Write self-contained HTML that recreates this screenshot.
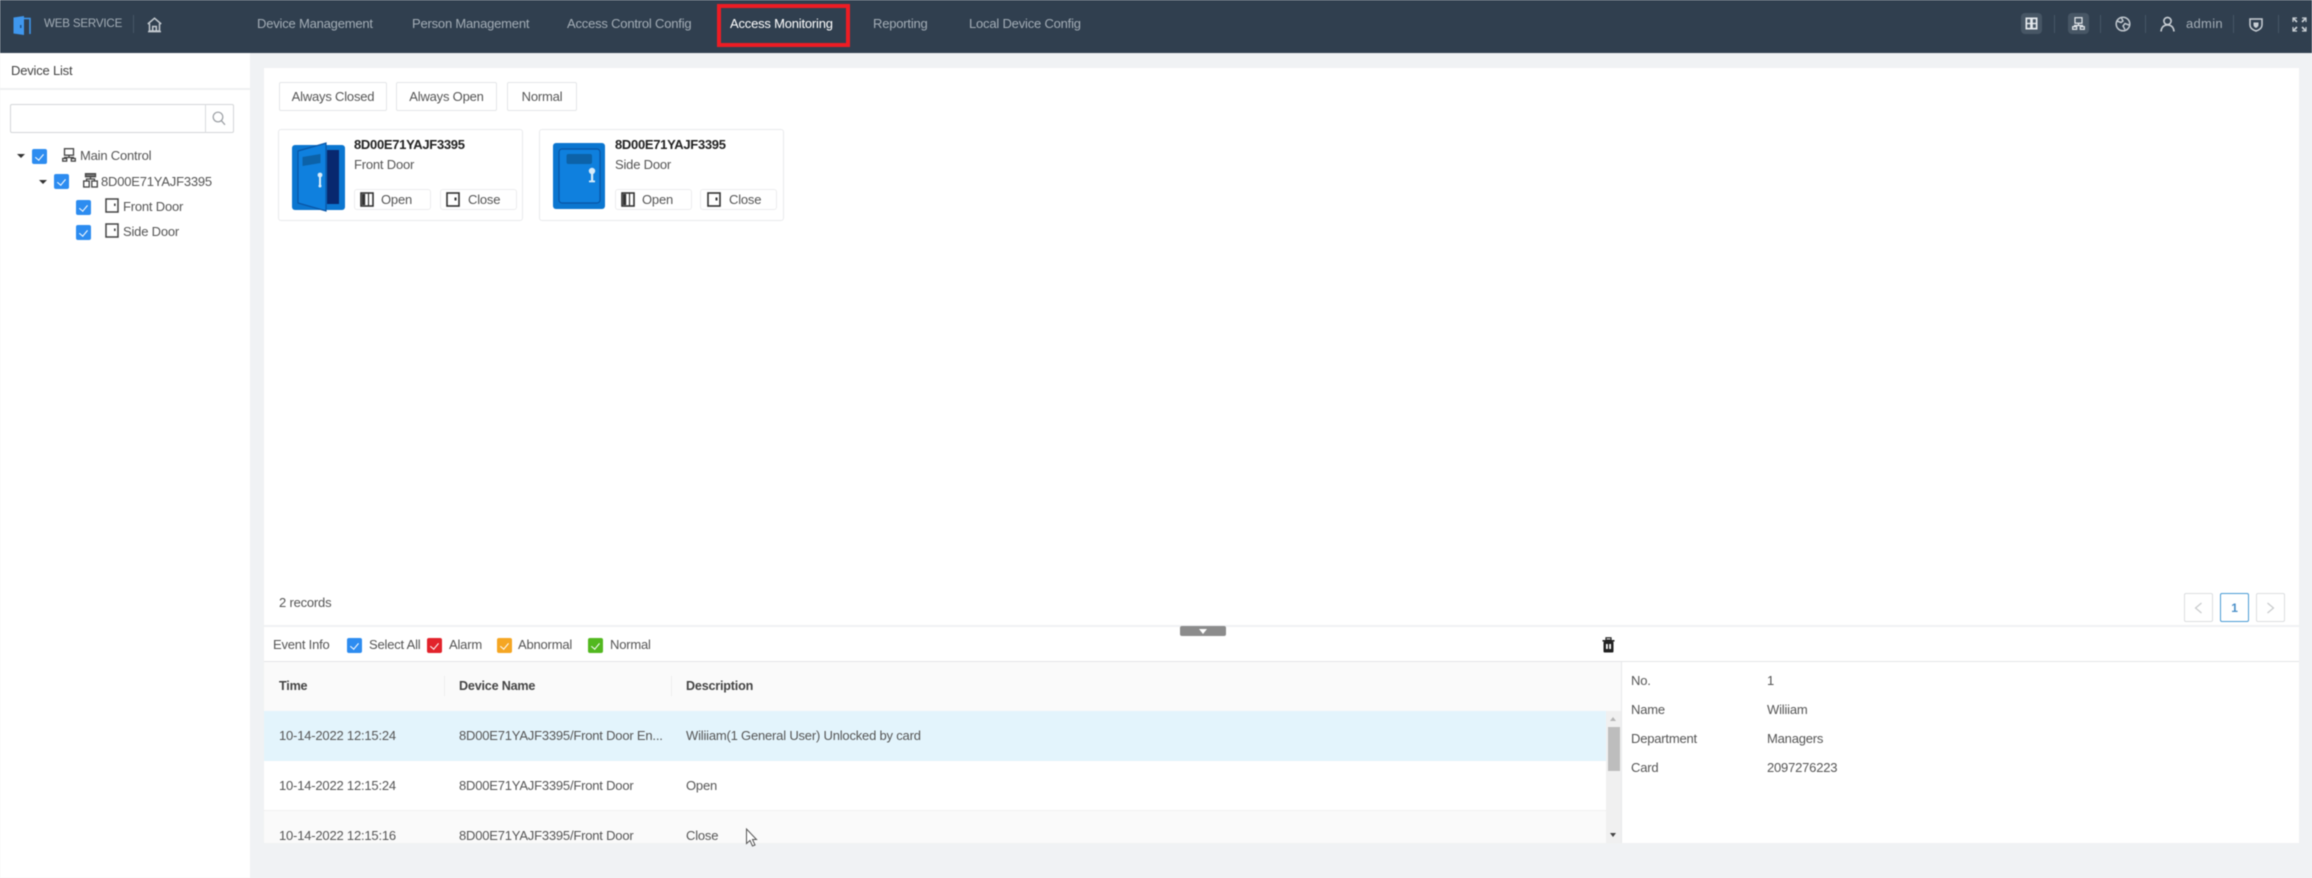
<!DOCTYPE html>
<html><head><meta charset="utf-8"><style>
html,body{margin:0;padding:0;width:2312px;height:878px;overflow:hidden;background:#f0f2f4}
#r{position:absolute;left:0;top:0;width:2312px;height:878px;overflow:hidden;filter:blur(.45px);font-family:"Liberation Sans",sans-serif;font-size:13px;letter-spacing:-.2px;color:#444}
#r div,#r span,#r svg{position:absolute;box-sizing:border-box}
.t{white-space:nowrap;line-height:20px;height:20px}
.n{color:#a3adb6;top:14px}
.sep{width:1px;background:#465565;top:15px;height:18px}
.btn{background:#fff;border:1px solid #e4e6e8;border-radius:2px;text-align:center;line-height:28px;color:#555}
.cd{background:#fff;border:1px solid #e9eaec;border-radius:3px}
.mb{background:#fff;border:1px solid #ececee;border-radius:3px;height:21px;width:77px}
.cb{width:15px;height:15px;border-radius:2px;background:#2d8cf0}
.cb:after{content:"";position:absolute;left:5px;top:2.5px;width:3.5px;height:7px;border:solid #fff;border-width:0 1.6px 1.6px 0;transform:rotate(40deg)}
.tri{width:0;height:0;border-left:4px solid transparent;border-right:4px solid transparent;border-top:4px solid #333}
.ti{font-weight:bold;font-size:13px;letter-spacing:-.3px;color:#222}
.th{font-weight:bold;font-size:12.6px;letter-spacing:-.2px;color:#444}
</style></head><body><div id="r">

<div style="left:0;top:0;width:2312px;height:53px;background:#303f4f"></div>
<svg style="left:12px;top:15px" width="20" height="21" viewBox="0 0 20 21"><path d="M1.5 2.5 L12 1 V20 L1.5 18.5 Z" fill="#3f97ee"/><path d="M12 3.5 H18 V19" fill="none" stroke="#3f97ee" stroke-width="1.5"/><rect x="8" y="10" width="1.5" height="3" fill="#1c4f86"/></svg>
<div class="t" style="left:44px;top:14px;color:#a3adb6;font-size:11.6px;letter-spacing:-.2px">WEB SERVICE</div>
<div class="sep" style="left:133px"></div>
<svg style="left:147px;top:17px" width="15" height="16" viewBox="0 0 15 16" fill="none" stroke="#c4cad0" stroke-width="1.5"><path d="M.8 7 L7.5 1.2 L14.2 7"/><path d="M2.5 6.5 V14 H12.5 V6.5"/><path d="M1 14.6 H14"/><path d="M5.7 14 V9.5 H9.3 V14"/></svg>
<div class="t n" style="left:257px">Device Management</div>
<div class="t n" style="left:412px">Person Management</div>
<div class="t n" style="left:567px">Access Control Config</div>
<div class="t" style="left:730px;top:14px;color:#fff">Access Monitoring</div>
<div style="left:717px;top:4px;width:133px;height:43px;border:4.5px solid #ed1c24"></div>
<div class="t n" style="left:873px">Reporting</div>
<div class="t n" style="left:969px">Local Device Config</div>

<div style="left:2021px;top:13px;width:21px;height:21px;border-radius:4px;background:#475665"></div>
<svg style="left:2025px;top:17px" width="13" height="13" viewBox="0 0 13 13"><rect x=".5" y=".5" width="12" height="12" fill="#e6eaee"/><rect x="2.2" y="2.2" width="3" height="3.6" fill="#475665"/><rect x="7.8" y="2.2" width="3" height="3.6" fill="#475665"/><rect x="2.2" y="7.2" width="3" height="3.6" fill="#475665"/><rect x="7.8" y="7.2" width="3" height="3.6" fill="#475665"/></svg>
<div class="sep" style="left:2054px"></div>
<div style="left:2068px;top:13px;width:21px;height:21px;border-radius:4px;background:#475665"></div>
<svg style="left:2072px;top:17px" width="13" height="13" viewBox="0 0 13 13" fill="none" stroke="#e6eaee" stroke-width="1.2"><rect x="3" y=".7" width="7" height="5.5"/><path d="M6.5 6.2 V8.5 M2.5 10 V8.5 H10.5 V10"/><rect x=".7" y="9.7" width="4" height="2.6"/><rect x="8.3" y="9.7" width="4" height="2.6"/></svg>
<div class="sep" style="left:2100px"></div>
<svg style="left:2115px;top:16px" width="16" height="16" viewBox="0 0 16 16" fill="none" stroke="#c0c7ce" stroke-width="1.5"><circle cx="8" cy="8" r="6.8"/><path d="M2 5 L6 6.5 L8 5 L6.5 2 M14 9 L10 7.5 L8 10 L10 13.5"/></svg>
<div class="sep" style="left:2145px"></div>
<svg style="left:2160px;top:16px" width="15" height="16" viewBox="0 0 15 16" fill="none" stroke="#c8ced4" stroke-width="1.6"><circle cx="7.5" cy="5" r="3.6"/><path d="M1 15.5 C1.5 11 4 9 7.5 9 S13.5 11 14 15.5"/></svg>
<div class="t" style="left:2186px;top:14px;color:#a3adb6;letter-spacing:.3px">admin</div>
<div class="sep" style="left:2233px"></div>
<svg style="left:2249px;top:17px" width="14" height="15" viewBox="0 0 14 15" fill="none" stroke="#c8ced4" stroke-width="1.5"><path d="M1 2 H13 V8 C13 11 10 13 7 14 C4 13 1 11 1 8 Z"/><path d="M4.5 5.5 H9.5 V8 C9.5 9.5 8 10.5 7 11 C6 10.5 4.5 9.5 4.5 8 Z" fill="#c8ced4" stroke="none"/></svg>
<div class="sep" style="left:2278px"></div>
<svg style="left:2292px;top:17px" width="15" height="15" viewBox="0 0 15 15" fill="none" stroke="#c8ced4" stroke-width="1.7"><path d="M1 1 L5 5 M14 1 L10 5 M1 14 L5 10 M14 14 L10 10"/><path d="M1 5 V1 H5 M10 1 H14 V5 M1 10 V14 H5 M10 14 H14 V10" stroke-width="1.2"/></svg>

<div style="left:0;top:53px;width:250px;height:825px;background:#fff"></div>
<div style="left:0;top:88px;width:250px;height:2px;background:#eff0f2"></div>
<div class="t" style="left:11px;top:61px;color:#444">Device List</div>
<div style="left:10px;top:104px;width:224px;height:29px;background:#fff;border:1px solid #d4d6d9;border-radius:2px"></div>
<div style="left:205px;top:104px;width:1px;height:29px;background:#d9dbde"></div>
<svg style="left:212px;top:111px" width="14" height="15" viewBox="0 0 14 15" fill="none" stroke="#9a9ea3" stroke-width="1.2"><circle cx="6" cy="6" r="4.8"/><path d="M9.5 9.8 L13 13.8"/></svg>

<div class="tri" style="left:17px;top:154px"></div><div class="cb" style="left:32px;top:149px"></div>
<svg style="left:62px;top:148px" width="14" height="14" viewBox="0 0 14 14" fill="none" stroke="#444" stroke-width="1.3"><rect x="2.5" y=".7" width="9" height="6.5"/><path d="M7 7.2 V9.5 M2.5 11 V9.5 H11.5 V11"/><rect x=".7" y="10.5" width="4" height="2.6"/><rect x="9.3" y="10.5" width="4" height="2.6"/></svg>
<div class="t" style="left:80px;top:146px;color:#555">Main Control</div>
<div class="tri" style="left:39px;top:180px"></div><div class="cb" style="left:54px;top:174px"></div>
<svg style="left:83px;top:173px" width="15" height="15" viewBox="0 0 15 15" fill="none" stroke="#444" stroke-width="1.3"><rect x="2.5" y=".7" width="10" height="3" fill="#777"/><path d="M7.5 4 V6 M3.5 8 V6 H11.5 V8"/><rect x=".7" y="8" width="5.5" height="6"/><rect x="8.8" y="8" width="5.5" height="6"/></svg>
<div class="t" style="left:101px;top:172px;color:#555">8D00E71YAJF3395</div>
<div class="cb" style="left:76px;top:200px"></div>
<svg style="left:105px;top:198px" width="14" height="15" viewBox="0 0 14 15" fill="none" stroke="#444" stroke-width="1.5"><rect x="1" y="1" width="12" height="13"/><rect x="9" y="5.5" width="1.6" height="2.5" fill="#444" stroke="none"/></svg>
<div class="t" style="left:123px;top:197px;color:#555">Front Door</div>
<div class="cb" style="left:76px;top:225px"></div>
<svg style="left:105px;top:223px" width="14" height="15" viewBox="0 0 14 15" fill="none" stroke="#444" stroke-width="1.5"><rect x="1" y="1" width="12" height="13"/><rect x="9" y="5.5" width="1.6" height="2.5" fill="#444" stroke="none"/></svg>
<div class="t" style="left:123px;top:222px;color:#555">Side Door</div>

<div style="left:264px;top:68px;width:2035px;height:557px;background:#fff"></div>
<div class="btn" style="left:279px;top:82px;width:108px;height:29px">Always Closed</div>
<div class="btn" style="left:396px;top:82px;width:101px;height:29px">Always Open</div>
<div class="btn" style="left:507px;top:82px;width:70px;height:29px">Normal</div>

<div class="cd" style="left:278px;top:129px;width:245px;height:92px"></div>
<svg style="left:292px;top:142px" width="53" height="70" viewBox="0 0 53 70"><rect x="0" y="3" width="53" height="65" rx="3" fill="#0b76d0"/><rect x="35" y="8" width="12" height="54" fill="#08286f"/><path d="M6 9 L34 1 V69 L6 61 Z" fill="#0f80de" stroke="#0a55a5" stroke-width="1.2"/><path d="M10.5 15 L28.5 12 V21 L10.5 24 Z" fill="#0c62a8"/><circle cx="28" cy="33" r="2.4" fill="#d8ecfa"/><rect x="27" y="34" width="2" height="9" fill="#d8ecfa"/><circle cx="28" cy="44" r="1.5" fill="#d8ecfa"/></svg>
<div class="t ti" style="left:354px;top:135px">8D00E71YAJF3395</div>
<div class="t" style="left:354px;top:155px;color:#555">Front Door</div>
<div class="mb" style="left:354px;top:189px"></div>
<svg style="left:360px;top:192px" width="14" height="15" viewBox="0 0 14 15" fill="none" stroke="#333" stroke-width="1.6"><rect x="1" y="1" width="12" height="13"/><rect x="2" y="2" width="3.2" height="11" fill="#333" stroke="none"/><path d="M8.5 1 V14" stroke-width="1.2"/></svg>
<div class="t" style="left:381px;top:190px;color:#555">Open</div>
<div class="mb" style="left:440px;top:189px"></div>
<svg style="left:446px;top:192px" width="14" height="15" viewBox="0 0 14 15" fill="none" stroke="#333" stroke-width="1.6"><rect x="1" y="1" width="12" height="13"/><rect x="8.5" y="5.5" width="2" height="3" fill="#333" stroke="none"/></svg>
<div class="t" style="left:468px;top:190px;color:#555">Close</div>

<div class="cd" style="left:539px;top:129px;width:245px;height:92px"></div>
<svg style="left:553px;top:142px" width="53" height="68" viewBox="0 0 53 68"><rect x="0" y="1" width="52" height="66" rx="3" fill="#0b76d0"/><rect x="6" y="7" width="41" height="54" rx="3" fill="#0f80de" stroke="#0a55a5" stroke-width="1.2"/><rect x="13.5" y="12" width="25.5" height="10" rx="2" fill="#0c62a8"/><circle cx="39" cy="29" r="3.2" fill="#d8ecfa"/><rect x="38" y="31" width="2.2" height="8" fill="#d8ecfa"/><rect x="36" y="38.5" width="6" height="1.8" fill="#d8ecfa"/></svg>
<div class="t ti" style="left:615px;top:135px">8D00E71YAJF3395</div>
<div class="t" style="left:615px;top:155px;color:#555">Side Door</div>
<div class="mb" style="left:615px;top:189px"></div>
<svg style="left:621px;top:192px" width="14" height="15" viewBox="0 0 14 15" fill="none" stroke="#333" stroke-width="1.6"><rect x="1" y="1" width="12" height="13"/><rect x="2" y="2" width="3.2" height="11" fill="#333" stroke="none"/><path d="M8.5 1 V14" stroke-width="1.2"/></svg>
<div class="t" style="left:642px;top:190px;color:#555">Open</div>
<div class="mb" style="left:700px;top:189px"></div>
<svg style="left:707px;top:192px" width="14" height="15" viewBox="0 0 14 15" fill="none" stroke="#333" stroke-width="1.6"><rect x="1" y="1" width="12" height="13"/><rect x="8.5" y="5.5" width="2" height="3" fill="#333" stroke="none"/></svg>
<div class="t" style="left:729px;top:190px;color:#555">Close</div>

<div class="t" style="left:279px;top:593px;color:#555">2 records</div>
<div class="btn" style="left:2184px;top:593px;width:29px;height:29px;border-color:#dcdee0"></div>
<svg style="left:2194px;top:602px" width="9" height="12" viewBox="0 0 9 12" fill="none" stroke="#c8cacc" stroke-width="1.2"><path d="M7.5 1 L1.5 6 L7.5 11"/></svg>
<div class="btn" style="left:2220px;top:593px;width:29px;height:29px;border-color:#4a9bd4;color:#4a8fc8;font-weight:bold;font-size:12px">1</div>
<div class="btn" style="left:2256px;top:593px;width:29px;height:29px;border-color:#dcdee0"></div>
<svg style="left:2266px;top:602px" width="9" height="12" viewBox="0 0 9 12" fill="none" stroke="#c8cacc" stroke-width="1.2"><path d="M1.5 1 L7.5 6 L1.5 11"/></svg>

<div style="left:264px;top:625px;width:2035px;height:2px;background:#f0f1f3"></div>
<div style="left:264px;top:627px;width:2035px;height:216px;background:#fff"></div>
<div style="left:1180px;top:626px;width:46px;height:10px;background:#8c8c8c;border-radius:2px"></div>
<div style="left:1199px;top:629px;width:0;height:0;border-left:4px solid transparent;border-right:4px solid transparent;border-top:5px solid #fff"></div>

<div class="t" style="left:273px;top:635px;color:#555">Event Info</div>
<div class="cb" style="left:347px;top:638px;background:#2d8cf0"></div>
<div class="t" style="left:369px;top:635px;color:#555">Select All</div>
<div class="cb" style="left:427px;top:638px;background:#e2232b"></div>
<div class="t" style="left:449px;top:635px;color:#555">Alarm</div>
<div class="cb" style="left:497px;top:638px;background:#f5a623"></div>
<div class="t" style="left:518px;top:635px;color:#555">Abnormal</div>
<div class="cb" style="left:588px;top:638px;background:#52b81f"></div>
<div class="t" style="left:610px;top:635px;color:#555">Normal</div>
<svg style="left:1601px;top:637px" width="15" height="16" viewBox="0 0 15 16"><rect x="5" y=".8" width="5" height="2.2" fill="none" stroke="#222" stroke-width="1.2"/><rect x="1.5" y="3" width="12" height="1.6" fill="#222"/><rect x="2.5" y="4.5" width="10" height="11" rx="1" fill="#222"/><rect x="5" y="7" width="1.8" height="5" fill="#fff"/><rect x="8.2" y="7" width="1.8" height="5" fill="#fff"/></svg>

<div style="left:264px;top:661px;width:2035px;height:1px;background:#e4e5e7"></div>
<div style="left:264px;top:662px;width:1357px;height:49px;background:#fafafa"></div>
<div style="left:444px;top:676px;width:1px;height:20px;background:#eeeeee"></div>
<div style="left:671px;top:676px;width:1px;height:20px;background:#eeeeee"></div>
<div class="t th" style="left:279px;top:676px">Time</div>
<div class="t th" style="left:459px;top:676px">Device Name</div>
<div class="t th" style="left:686px;top:676px">Description</div>

<div style="left:264px;top:711px;width:1342px;height:50px;background:#e3f4fc"></div>
<div style="left:264px;top:810px;width:1342px;height:33px;background:#fafafa;border-top:1px solid #f0f0f0"></div>
<div class="t" style="left:279px;top:726px;color:#555">10-14-2022 12:15:24</div>
<div class="t" style="left:459px;top:726px;color:#555">8D00E71YAJF3395/Front Door En...</div>
<div class="t" style="left:686px;top:726px;color:#555">Wiliiam(1 General User) Unlocked by card</div>
<div class="t" style="left:279px;top:776px;color:#555">10-14-2022 12:15:24</div>
<div class="t" style="left:459px;top:776px;color:#555">8D00E71YAJF3395/Front Door</div>
<div class="t" style="left:686px;top:776px;color:#555">Open</div>
<div class="t" style="left:279px;top:826px;color:#555;height:17px;overflow:hidden">10-14-2022 12:15:16</div>
<div class="t" style="left:459px;top:826px;color:#555;height:17px;overflow:hidden">8D00E71YAJF3395/Front Door</div>
<div class="t" style="left:686px;top:826px;color:#555;height:17px;overflow:hidden">Close</div>

<div style="left:1606px;top:711px;width:15px;height:132px;background:#f0f0f0"></div>
<div style="left:1608px;top:727px;width:12px;height:44px;background:#bdbdbd"></div>
<div style="left:1610px;top:717px;width:0;height:0;border-left:3px solid transparent;border-right:3px solid transparent;border-bottom:4px solid #b5b5b5"></div>
<div style="left:1610px;top:833px;width:0;height:0;border-left:3.5px solid transparent;border-right:3.5px solid transparent;border-top:4px solid #444"></div>
<div style="left:1621px;top:662px;width:1px;height:181px;background:#e8e9eb"></div>

<div class="t" style="left:1631px;top:671px;color:#555">No.</div><div class="t" style="left:1767px;top:671px;color:#555">1</div>
<div class="t" style="left:1631px;top:700px;color:#555">Name</div><div class="t" style="left:1767px;top:700px;color:#555">Wiliiam</div>
<div class="t" style="left:1631px;top:729px;color:#555">Department</div><div class="t" style="left:1767px;top:729px;color:#555">Managers</div>
<div class="t" style="left:1631px;top:758px;color:#555">Card</div><div class="t" style="left:1767px;top:758px;color:#555">2097276223</div>

<svg style="left:745px;top:828px" width="13" height="20" viewBox="0 0 13 20"><path d="M1.5 1 V15.5 L5 12.5 L7.5 18 L10 17 L7.5 11.5 L11.5 11.5 Z" fill="#fff" stroke="#555" stroke-width="1"/></svg>
</div></body></html>
